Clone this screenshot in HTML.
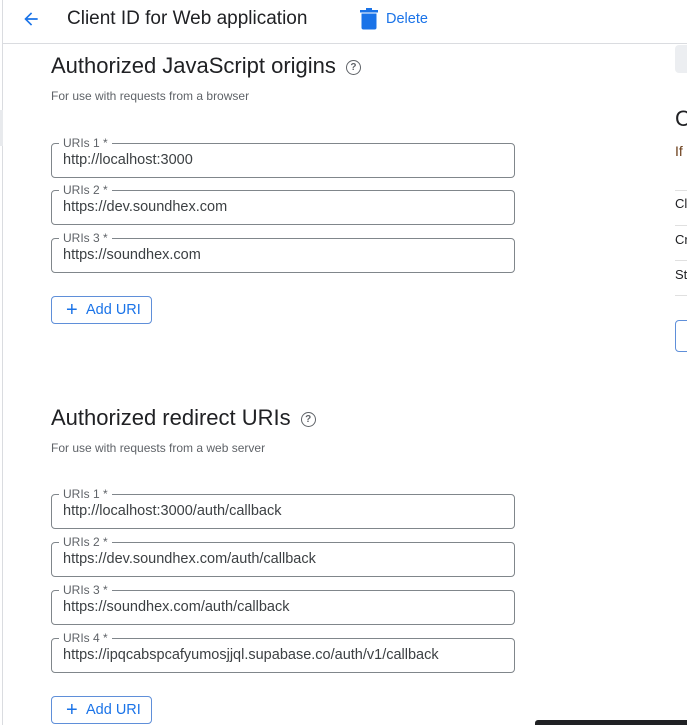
<!DOCTYPE html><html><head><style>
body{margin:0;width:687px;height:725px;overflow:hidden;background:#fff;font-family:"Liberation Sans",sans-serif;position:relative;color:#202124}
.a{position:absolute}
.f{position:absolute;left:51px;width:462px;height:33px;border:1px solid #80868b;border-radius:4px}
.f .l{position:absolute;left:7px;top:-8px;background:#fff;padding:0 4px;font-size:12px;color:#5f6368;line-height:14px}
.f .v{position:absolute;left:11px;top:8px;font-size:14.5px;color:#3c4043}
.btn{position:absolute;left:51px;width:99px;height:26px;border:1px solid #5f8fd9;border-radius:4px;color:#1a73e8;font-size:14.5px;line-height:26px}
.btn span{position:absolute;left:14px;top:0;font-size:20px}
.btn b{font-weight:normal;position:absolute;left:34px}
h2{position:absolute;margin:0;font-weight:normal;font-size:22px;left:51px}
.s{position:absolute;left:51px;font-size:12px;color:#5f6368}
.q{display:inline-block;width:13px;height:13px;border:1.5px solid #5f6368;border-radius:50%;font-size:10px;text-align:center;line-height:13px;color:#5f6368;vertical-align:middle;margin-left:10px;font-weight:bold}
.r{position:absolute;left:675px;width:20px;border-top:1px solid #e0e0e0}
</style></head><body>
<div class="a" style="left:2px;top:0;width:1px;height:725px;background:#dadce0"></div>
<div class="a" style="left:0;top:110px;width:3px;height:36px;background:#e8eaed"></div>
<div class="a" style="left:3px;top:43px;width:684px;height:1px;background:#dadce0"></div>
<svg class="a" style="left:21px;top:9px" width="20" height="20" viewBox="0 0 24 24"><path d="M20 11H7.8l5.6-5.6L12 4l-8 8 8 8 1.4-1.4L7.8 13H20z" fill="#1a73e8"/></svg>
<div class="a" style="left:67px;top:8px;font-size:19px">Client ID for Web application</div>
<svg class="a" style="left:360px;top:8px" width="18" height="22" viewBox="0 0 18 22"><rect x="0" y="2" width="18" height="2.5" fill="#1a73e8"/><rect x="6" y="0" width="6" height="3" fill="#1a73e8"/><path d="M1.5 5.5h15v14a2 2 0 0 1-2 2h-11a2 2 0 0 1-2-2z" fill="#1a73e8"/></svg>
<div class="a" style="left:386px;top:11px;font-size:14.5px;color:#1a73e8">Delete</div>
<h2 style="top:53px">Authorized JavaScript origins<span class="q">?</span></h2>
<div class="s" style="top:89px">For use with requests from a browser</div>
<div class="f" style="top:143px"><div class="l">URIs 1 *</div><div class="v">http://localhost:3000</div></div>
<div class="f" style="top:190px"><div class="l">URIs 2 *</div><div class="v">https://dev.soundhex.com</div></div>
<div class="f" style="top:238px"><div class="l">URIs 3 *</div><div class="v">https://soundhex.com</div></div>
<div class="btn" style="top:296px"><span>+</span><b>Add URI</b></div>
<h2 style="top:405px">Authorized redirect URIs<span class="q">?</span></h2>
<div class="s" style="top:441px">For use with requests from a web server</div>
<div class="f" style="top:494px"><div class="l">URIs 1 *</div><div class="v">http://localhost:3000/auth/callback</div></div>
<div class="f" style="top:542px"><div class="l">URIs 2 *</div><div class="v">https://dev.soundhex.com/auth/callback</div></div>
<div class="f" style="top:590px"><div class="l">URIs 3 *</div><div class="v">https://soundhex.com/auth/callback</div></div>
<div class="f" style="top:638px"><div class="l">URIs 4 *</div><div class="v">https://ipqcabspcafyumosjjql.supabase.co/auth/v1/callback</div></div>
<div class="btn" style="top:696px"><span>+</span><b>Add URI</b></div>
<div class="a" style="left:675px;top:45px;width:20px;height:28px;background:#eceef1;border-radius:4px"></div>
<div class="a" style="left:675px;top:106px;font-size:22px">C</div>
<div class="a" style="left:675px;top:143px;font-size:14px;color:#6b3e1a">If</div>
<div class="r" style="top:190px"></div><div class="a" style="left:675px;top:196px;font-size:13px">Cl</div>
<div class="r" style="top:225px"></div><div class="a" style="left:675px;top:232px;font-size:13px">Cr</div>
<div class="r" style="top:260px"></div><div class="a" style="left:675px;top:267px;font-size:13px">St</div>
<div class="r" style="top:295px"></div>
<div class="a" style="left:675px;top:320px;width:20px;height:30px;border:1px solid #5f8fd9;border-radius:4px"></div>
<div class="a" style="left:535px;top:720px;width:152px;height:5px;background:#202124;border-radius:3px 0 0 0"></div>
</body></html>
